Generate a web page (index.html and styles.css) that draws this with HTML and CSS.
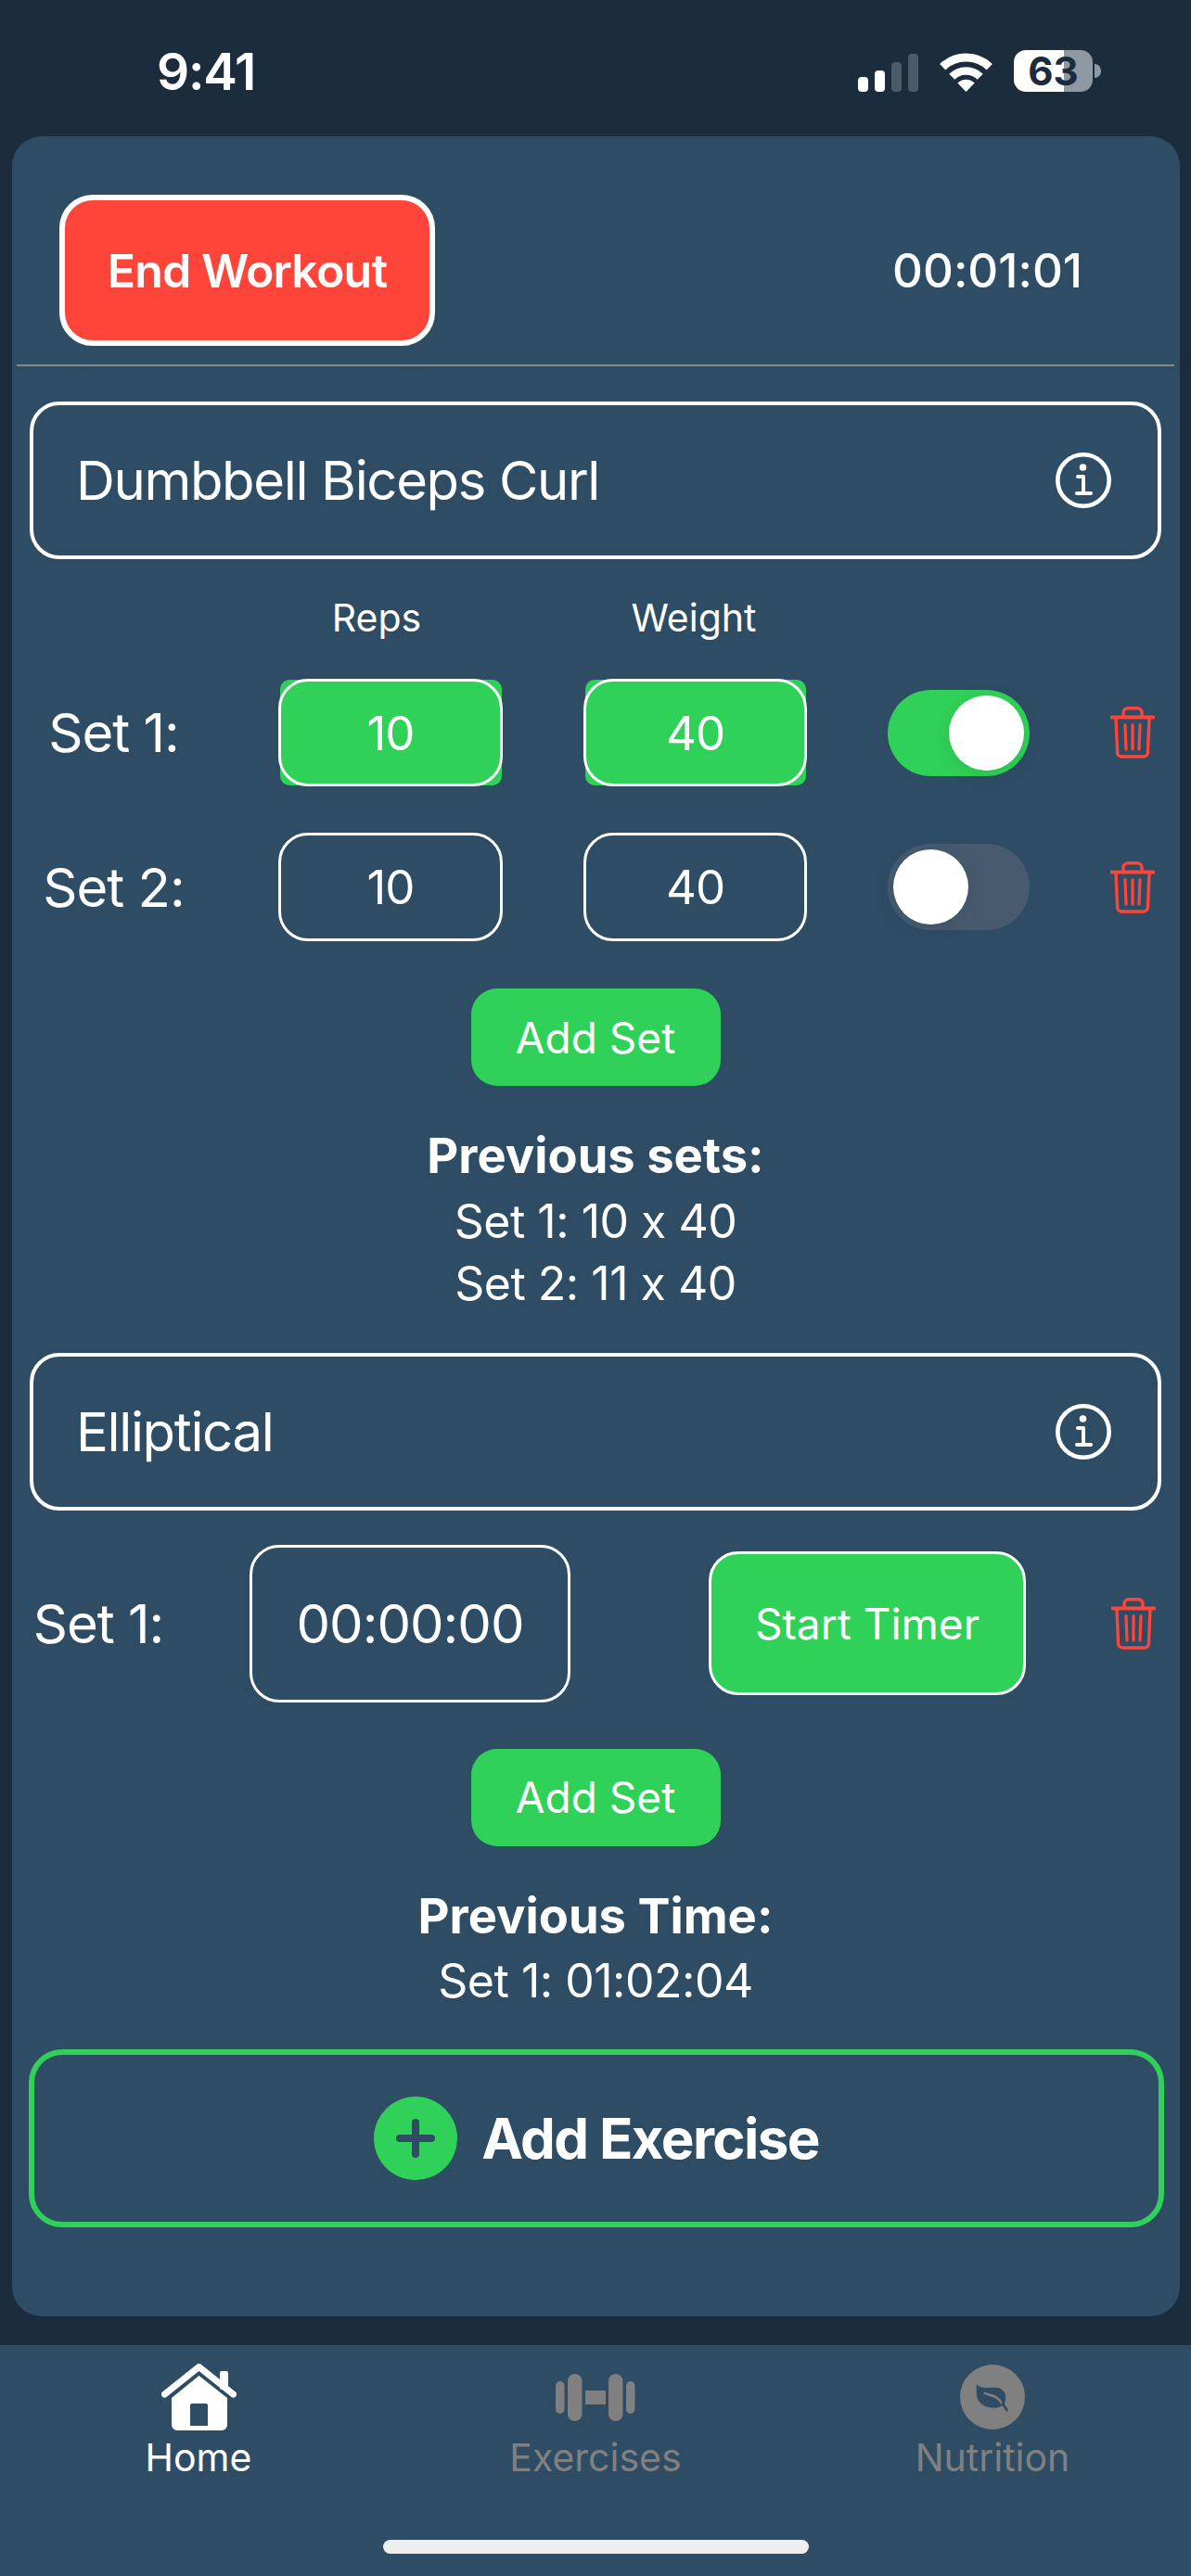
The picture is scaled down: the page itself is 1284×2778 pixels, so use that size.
FILE: index.html
```html
<!DOCTYPE html>
<html lang="en">
<head>
  <meta charset="UTF-8">
  <title>Workout</title>
  <link rel="stylesheet" href="styles.css">
</head>
<body>
  <!-- status bar -->
  <div class="status-bar">
    <span class="clock">9:41</span>
    <div class="status-icons">
      <svg class="signal" width="65" height="41" viewBox="0 0 65 41">
        <rect x="0" y="25" width="11" height="16" rx="4" fill="#fff"/>
        <rect x="18" y="18" width="11" height="23" rx="4" fill="#fff"/>
        <rect x="36" y="9" width="11" height="32" rx="4" fill="#4a5a69"/>
        <rect x="54" y="0" width="11" height="41" rx="4" fill="#4a5a69"/>
      </svg>
      <svg class="wifi" width="57" height="42" viewBox="0 0 57 42">
        <path d="M3.2 15.2A36.5 36.5 0 0 1 53.8 15.2" fill="none" stroke="#fff" stroke-width="9"/>
        <path d="M13.3 25.8A21.5 21.5 0 0 1 43.7 25.8" fill="none" stroke="#fff" stroke-width="8.5"/>
        <path d="M28.5 42L19.3 32.6A13 13 0 0 1 37.7 32.6Z" fill="#fff"/>
      </svg>
      <div class="battery">
        <div class="battery-body">63</div>
        <div class="battery-cap"></div>
      </div>
    </div>
  </div>

  <div class="panel">
    <div class="top-row">
      <button class="end-btn">End Workout</button>
      <span class="timer">00:01:01</span>
    </div>
    <div class="divider"></div>

    <!-- first exercise -->
    <div class="exercise-head">
      <span>Dumbbell Biceps Curl</span>
      <svg width="60" height="60" viewBox="0 0 60 60">
        <circle cx="30" cy="30" r="27.7" fill="none" stroke="#fff" stroke-width="4.6"/>
        <circle cx="29.5" cy="16" r="3.8" fill="#fff"/>
        <path d="M24 26H30V44M23 44H38" fill="none" stroke="#fff" stroke-width="4" stroke-linecap="round" stroke-linejoin="round"/>
      </svg>
    </div>

    <div class="set-grid col-labels">
      <span></span>
      <span class="col-label reps-label">Reps</span>
      <span class="col-label weight-label">Weight</span>
    </div>

    <div class="set-grid">
      <span class="set-label">Set 1:</span>
      <div class="field-fill"><div class="field">10</div></div>
      <div class="field-fill"><div class="field">40</div></div>
      <div class="toggle on"><div class="knob"></div></div>
      <svg class="trash" width="48" height="56" viewBox="0 0 48 56">
        <path d="M1.5 11.5H46.5" stroke="#ff453a" stroke-width="3.8" stroke-linecap="round" fill="none"/>
        <path d="M14 11V6.5A5 5 0 0 1 19 1.7H29A5 5 0 0 1 34 6.5V11" stroke="#ff453a" stroke-width="3.4" fill="none"/>
        <path d="M6 12L7.6 49.5A4.5 4.5 0 0 0 12 54H36A4.5 4.5 0 0 0 40.4 49.5L42 12" stroke="#ff453a" stroke-width="3.4" fill="none"/>
        <path d="M16 19.5L17 46M24 19.5V46M32 19.5L31 46" stroke="#ff453a" stroke-width="3.2" stroke-linecap="round" fill="none"/>
      </svg>
    </div>

    <div class="set-grid second-set">
      <span class="set-label">Set 2:</span>
      <div class="field">10</div>
      <div class="field">40</div>
      <div class="toggle"><div class="knob"></div></div>
      <svg class="trash" width="48" height="56" viewBox="0 0 48 56">
        <path d="M1.5 11.5H46.5" stroke="#ff453a" stroke-width="3.8" stroke-linecap="round" fill="none"/>
        <path d="M14 11V6.5A5 5 0 0 1 19 1.7H29A5 5 0 0 1 34 6.5V11" stroke="#ff453a" stroke-width="3.4" fill="none"/>
        <path d="M6 12L7.6 49.5A4.5 4.5 0 0 0 12 54H36A4.5 4.5 0 0 0 40.4 49.5L42 12" stroke="#ff453a" stroke-width="3.4" fill="none"/>
        <path d="M16 19.5L17 46M24 19.5V46M32 19.5L31 46" stroke="#ff453a" stroke-width="3.2" stroke-linecap="round" fill="none"/>
      </svg>
    </div>

    <button class="add-set">Add Set</button>

    <div class="previous">
      <strong>Previous sets:</strong>
      <div>Set 1: 10 x 40</div>
      <div>Set 2: 11 x 40</div>
    </div>

    <!-- second exercise -->
    <div class="exercise-head second-head">
      <span>Elliptical</span>
      <svg width="60" height="60" viewBox="0 0 60 60">
        <circle cx="30" cy="30" r="27.7" fill="none" stroke="#fff" stroke-width="4.6"/>
        <circle cx="29.5" cy="16" r="3.8" fill="#fff"/>
        <path d="M24 26H30V44M23 44H38" fill="none" stroke="#fff" stroke-width="4" stroke-linecap="round" stroke-linejoin="round"/>
      </svg>
    </div>

    <div class="timer-row">
      <span class="timer-label">Set 1:</span>
      <div class="time-field">00:00:00</div>
      <button class="start-btn">Start Timer</button>
      <svg class="trash" width="48" height="56" viewBox="0 0 48 56">
        <path d="M1.5 11.5H46.5" stroke="#ff453a" stroke-width="3.8" stroke-linecap="round" fill="none"/>
        <path d="M14 11V6.5A5 5 0 0 1 19 1.7H29A5 5 0 0 1 34 6.5V11" stroke="#ff453a" stroke-width="3.4" fill="none"/>
        <path d="M6 12L7.6 49.5A4.5 4.5 0 0 0 12 54H36A4.5 4.5 0 0 0 40.4 49.5L42 12" stroke="#ff453a" stroke-width="3.4" fill="none"/>
        <path d="M16 19.5L17 46M24 19.5V46M32 19.5L31 46" stroke="#ff453a" stroke-width="3.2" stroke-linecap="round" fill="none"/>
      </svg>
    </div>

    <button class="add-set">Add Set</button>

    <div class="previous previous-time">
      <strong>Previous Time:</strong>
      <div>Set 1: 01:02:04</div>
    </div>

    <button class="add-exercise">
      <svg width="90" height="90" viewBox="0 0 90 90">
        <circle cx="45" cy="45" r="45" fill="#30d158"/>
        <path d="M45 28V62M28 45H62" stroke="#2e4d65" stroke-width="8" stroke-linecap="round" fill="none"/>
      </svg>
      <span>Add Exercise</span>
    </button>
  </div>

  <!-- tab bar -->
  <div class="tab-bar">
    <div class="tabs">
      <div class="tab active">
        <div class="tab-icon">
          <svg width="81" height="72" viewBox="0 0 81 72">
            <path d="M3.5 33L40.5 3.5L77.5 33" fill="none" stroke="#fff" stroke-width="7" stroke-linecap="round" stroke-linejoin="round"/>
            <rect x="63" y="8" width="9" height="20" rx="2" fill="#fff"/>
            <path fill-rule="evenodd" fill="#fff" d="M40.5 13L71 37V66A6 6 0 0 1 65 72H17A6 6 0 0 1 11 66V37ZM33 43A2 2 0 0 0 31 45V67H50V45A2 2 0 0 0 48 43Z"/>
          </svg>
        </div>
        <span>Home</span>
      </div>
      <div class="tab">
        <div class="tab-icon">
          <svg width="86" height="51" viewBox="0 0 86 51">
            <rect x="0" y="8" width="9.5" height="35" rx="4.7" fill="#808080"/>
            <rect x="13" y="0" width="15.5" height="51" rx="7.7" fill="#808080"/>
            <rect x="32" y="18" width="22" height="15" fill="#808080"/>
            <rect x="57" y="0" width="15.5" height="51" rx="7.7" fill="#808080"/>
            <rect x="76" y="8" width="9.5" height="35" rx="4.7" fill="#808080"/>
          </svg>
        </div>
        <span>Exercises</span>
      </div>
      <div class="tab">
        <div class="tab-icon">
          <svg width="70" height="70" viewBox="0 0 70 70">
            <circle cx="35" cy="35" r="35" fill="#808080"/>
            <path d="M17.7 20.7C20 24 24 25 29 25L38 24.7C45 25 50 30 49.3 36C49 39 48.5 41 47.5 43C44 46 40 47 36 46.7C25 46.5 17.5 40 17.7 31Z" fill="#2e4d65"/>
            <path d="M26.7 30.7C30 33 36 32.5 40 36C42 37.5 44 39.5 45 42" fill="none" stroke="#808080" stroke-width="2.5" stroke-linecap="round"/>
            <path d="M46 42L50.5 49" fill="none" stroke="#2e4d65" stroke-width="2.8" stroke-linecap="round"/>
          </svg>
        </div>
        <span>Nutrition</span>
      </div>
    </div>
    <div class="home-indicator"></div>
  </div>
</body>
</html>
```

FILE: styles.css
```css
/* page */
* {
  box-sizing: border-box;
}

body {
  margin: 0;
  height: 2778px;
  display: flex;
  flex-direction: column;
  background-color: #1b2c3d;
  color: #fff;
  font-family: Inter, "Liberation Sans", sans-serif;
  font-variant-ligatures: no-contextual;
}

button {
  font-family: inherit;
  font-variant-ligatures: inherit;
  color: #fff;
  padding: 0;
}

/* status bar */
.status-bar {
  height: 147px;
  padding: 29px 97px 24px 169px;
  display: flex;
  align-items: center;
  justify-content: space-between;
}

.clock {
  margin-top: 2px;
  font-size: 55px;
  font-weight: 600;
  letter-spacing: -1.2px;
  line-height: 48px;
}

.status-icons {
  display: flex;
  align-items: flex-end;
  gap: 23px;
}

.battery {
  display: flex;
  align-items: center;
  gap: 2px;
}

.battery-body {
  width: 85px;
  height: 45px;
  border-radius: 13px;
  background: linear-gradient(to right, #fff 54px, #8f99a3 54px);
  color: #1b2c3d;
  font-size: 42px;
  font-weight: 700;
  line-height: 45px;
  text-align: center;
}

.battery-cap {
  width: 7px;
  height: 15px;
  border-radius: 0 8px 8px 0;
  background-color: #8f99a3;
}

/* main card */
.panel {
  height: 2351px;
  margin-left: 13px;
  margin-right: 12px;
  padding: 0 20px 0 19px;
  border-radius: 32px;
  background-color: #2e4d65;
}

.top-row {
  padding: 63px 85px 0 32px;
  height: 226px;
  display: flex;
  align-items: flex-start;
  justify-content: space-between;
}

.end-btn {
  width: 405px;
  height: 163px;
  border: 6px solid #fff;
  border-radius: 36px;
  background-color: #ff453a;
  font-size: 50px;
  font-weight: 600;
  letter-spacing: -0.8px;
}

.timer {
  margin-top: 59px;
  font-size: 51px;
  font-weight: 500;
  line-height: 46px;
}

.divider {
  height: 2px;
  margin: 20px -14px 0;
  background-color: #878b8f;
}

.exercise-head {
  height: 170px;
  margin-top: 38px;
  padding: 0 50px 0 46px;
  display: flex;
  align-items: center;
  justify-content: space-between;
  border: 4px solid #fff;
  border-radius: 32px;
  font-size: 58px;
  letter-spacing: -1.35px;
}

.second-head {
  margin-top: 40px;
}

/* set rows */
.set-grid {
  display: grid;
  grid-template-columns: 181px 242px 241px 153px 48px;
  column-gap: 87px;
  align-items: center;
  height: 116px;
  margin-top: 42px;
}

.second-set {
  height: 117px;
  margin-top: 50px;
}

.col-labels {
  height: 48px;
  margin-top: 39px;
}

.col-label {
  font-size: 41px;
  line-height: 48px;
  text-align: center;
}

.reps-label {
  padding-right: 30px;
}

.weight-label {
  padding-right: 3px;
}

.set-label,
.timer-label {
  font-size: 58px;
  letter-spacing: -1px;
  text-align: center;
}

.field {
  height: 100%;
  display: flex;
  align-items: center;
  justify-content: center;
  border: 3px solid #fff;
  border-radius: 32px;
  font-size: 51px;
  letter-spacing: -1px;
}

/* the green sits slightly inside the white outline */
.field-fill {
  height: calc(100% - 2px);
  margin: 0 1px 0 2px;
  border-radius: 10px;
  background-color: #30d158;
}

.field-fill .field {
  height: calc(100% + 2px);
  margin: -1px -1px 0 -2px;
}

.toggle {
  width: 153px;
  height: 93px;
  padding: 6px;
  display: flex;
  border-radius: 47px;
  background-color: #475a6f;
}

.toggle.on {
  justify-content: flex-end;
  background-color: #30d158;
}

.knob {
  width: 81px;
  height: 81px;
  border-radius: 50%;
  background-color: #fff;
  box-shadow: 0 4px 20px rgba(0, 0, 0, 0.1);
}

.add-set {
  display: block;
  width: 269px;
  height: 105px;
  margin: 51px auto 0;
  border: none;
  border-radius: 28px;
  background-color: #30d158;
  font-size: 46px;
}

.previous {
  margin-top: 42px;
  font-size: 50px;
  letter-spacing: -0.5px;
  line-height: 67.5px;
  text-align: center;
}

.previous strong {
  display: block;
  margin-bottom: 3px;
  font-size: 52.5px;
  font-weight: 700;
  letter-spacing: 0;
}

.timer-row {
  display: flex;
  align-items: center;
  height: 170px;
  margin-top: 37px;
}

.timer-row + .add-set {
  margin-top: 50px;
}

.timer-label {
  width: 148px;
}

.time-field {
  width: 346px;
  height: 170px;
  margin-left: 89px;
  display: flex;
  align-items: center;
  justify-content: center;
  border: 3px solid #fff;
  border-radius: 32px;
  font-size: 58px;
  letter-spacing: -1px;
}

.start-btn {
  width: 342px;
  height: 155px;
  margin-left: 149px;
  border: 3px solid #fff;
  border-radius: 32px;
  background-color: #30d158;
  font-size: 46px;
}

.timer-row .trash {
  margin-left: 92px;
}

.previous-time {
  margin-top: 42px;
}

.add-exercise {
  width: 1224px;
  height: 192px;
  margin: 39px 0 0 -1px;
  display: flex;
  align-items: center;
  justify-content: center;
  gap: 26px;
  border: 6px solid #30d158;
  border-radius: 36px;
  background: none;
  font-size: 60px;
  font-weight: 700;
  letter-spacing: -1.6px;
}

/* tab bar */
.tab-bar {
  height: 249px;
  margin-top: 31px;
  padding-top: 20px;
  display: flex;
  flex-direction: column;
  align-items: center;
  background-color: #2e4d65;
}

.tabs {
  width: 100%;
  display: grid;
  grid-template-columns: repeat(3, 1fr);
}

.tab {
  display: flex;
  flex-direction: column;
  align-items: center;
  color: #808080;
  font-size: 41px;
  line-height: 48px;
}

.tab.active {
  color: #fff;
}

.tab-icon {
  height: 72px;
  margin-bottom: 5px;
  display: flex;
  align-items: center;
}

.home-indicator {
  width: 459px;
  height: 15px;
  margin-top: 65px;
  border-radius: 8px;
  background-color: #eee;
}
```
